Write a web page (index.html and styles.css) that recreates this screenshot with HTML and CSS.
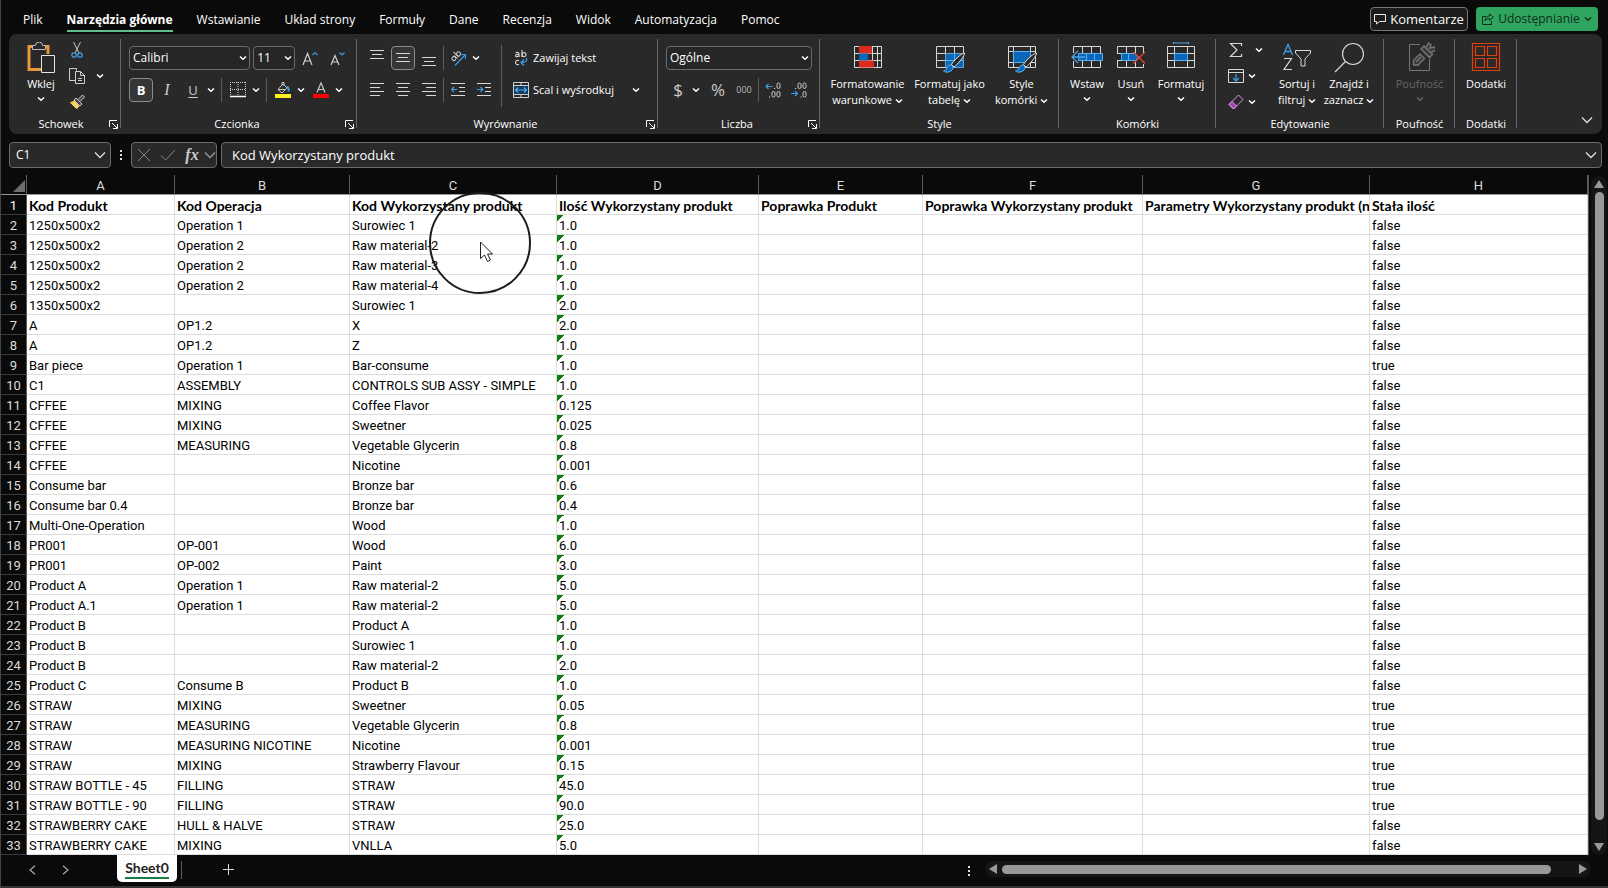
FILE: index.html
```html
<!DOCTYPE html>
<html lang="pl">
<head>
<meta charset="utf-8">
<title>Sheet0</title>
<link rel="stylesheet" href="styles.css">
</head>
<body>
<svg class="defs" aria-hidden="true">
  <symbol id="chev" viewBox="0 0 8 6"><path d="M1 1.500 4 4.300 7 1.500" fill="none" stroke="currentColor" stroke-width="1.500"/></symbol>
  <symbol id="chev-l" viewBox="0 0 12 8"><path d="M1 1.500 6 6.500 11 1.500" fill="none" stroke="currentColor" stroke-width="1.300"/></symbol>
  <symbol id="launch" viewBox="0 0 9 9"><path d="M.5 7V.5H8M3 3l5 5M8.500 4v4.500H4" fill="none" stroke="currentColor"/></symbol>
</svg>
<div class="app">
<header class="tabs">
  <nav class="menu">
    <a href="#">Plik</a><a href="#" class="on">Narzędzia główne</a><a href="#">Wstawianie</a><a href="#">Układ strony</a><a href="#">Formuły</a><a href="#">Dane</a><a href="#">Recenzja</a><a href="#">Widok</a><a href="#">Automatyzacja</a><a href="#">Pomoc</a>
  </nav>
  <button class="comments"><svg width="12" height="11" viewBox="0 0 12 11"><path d="M.5.5h11v7H5.500L2.500 10V7.500h-2z" fill="none" stroke="#eee"/></svg>Komentarze</button>
  <button class="share"><svg width="12" height="12" viewBox="0 0 12 12"><path d="M4 3.500H.5v8h9V8M7.500 1l4 3.200-4 3.200V5.500C5.500 5.500 4 6.200 3 8c0-3 2-5 4.500-5z" fill="none" stroke="#0c2f1b"/></svg>Udostępnianie<svg class="c"><use href="#chev"/></svg></button>
</header>

<section class="ribbon">
  <div class="group g1">
    <div class="tools">
      <button class="big"><svg width="28" height="32" viewBox="0 0 28 32"><path d="M7 4.500H2v23h12M17 4.500h4V12" fill="none" stroke="#e8973a" stroke-width="3"/><path d="M5.500 7.500v-4h3a3.500 3.500 0 0 1 7 0h3v4z" fill="#292929" stroke="#bbb"/><path d="M14.500 13.500h13v17h-13z" fill="#292929" stroke="#e6e6e6"/></svg><span>Wklej</span><svg class="c"><use href="#chev"/></svg></button>
      <div class="stack">
        <div class="row"><button class="ib" aria-label="Wytnij"><svg width="12" height="16" viewBox="0 0 12 16"><path d="M2.500 0 8 11M9.500 0 4 11" fill="none" stroke="#c8c8c8"/><circle cx="3" cy="13" r="2.200" fill="none" stroke="#3f9be0" stroke-width="1.300"/><circle cx="9" cy="13" r="2.200" fill="none" stroke="#3f9be0" stroke-width="1.300"/></svg></button></div>
        <div class="row"><button class="ib" aria-label="Kopiuj"><svg width="16" height="16" viewBox="0 0 16 16"><path d="M6 12.500H.5V.5h7v2M6.500 3.500h5l4 4v8h-9zM11.500 3.500v4h4M9 10.500h4M9 12.500h4" fill="none" stroke="#d0d0d0"/></svg></button><button class="dd" aria-label="Opcje kopiowania"><svg class="c"><use href="#chev"/></svg></button></div>
        <div class="row"><button class="ib" aria-label="Malarz formatów"><svg width="16" height="16" viewBox="0 0 16 16"><path d="M.8 8.500 5 6.500l5.500 5.500L8 15.300z" fill="#f4c542"/><path d="M3 9.500l4 4.500M5 8.500l4 4.500" stroke="#fff3c0"/><path d="M5 6l2-2 6 6-2 2zM9 5.500 13.500 1l2 2L11 7.500" fill="#444" stroke="#d0d0d0"/></svg></button></div>
      </div>
    </div>
    <footer><span>Schowek</span><button class="launch" aria-label="Opcje schowka"><svg><use href="#launch"/></svg></button></footer>
  </div>

  <div class="group g2">
    <div class="tools rows">
      <div class="row r3">
        <label class="combo font"><select aria-label="Czcionka"><option>Calibri</option></select><svg class="c"><use href="#chev"/></svg></label>
        <label class="combo size"><select aria-label="Rozmiar"><option>11</option></select><svg class="c"><use href="#chev"/></svg></label>
        <button class="ib" aria-label="Zwiększ czcionkę"><svg width="16" height="15" viewBox="0 0 16 15"><path d="M1 14 5.500 2.500 10 14M2.500 10h6" fill="none" stroke="#d0d0d0" stroke-width="1.200"/><path d="M10.500 4 13 1.500 15.500 4" fill="none" stroke="#3f9be0" stroke-width="1.200"/></svg></button>
        <button class="ib" aria-label="Zmniejsz czcionkę"><svg width="15" height="15" viewBox="0 0 15 15"><path d="M1 14 5 4.500 9 14M2.300 11h5.400" fill="none" stroke="#d0d0d0" stroke-width="1.200"/><path d="M9.500 1.500 12 4l2.500-2.500" fill="none" stroke="#3f9be0" stroke-width="1.200"/></svg></button>
      </div>
      <div class="row r2">
        <button class="ib on bold">B</button><button class="ib ital">I</button>
        <span class="split"><button class="ib under">U</button><button class="dd" aria-label="Opcje podkreślenia"><svg class="c"><use href="#chev"/></svg></button></span>
        <i class="sep wide"></i>
        <span class="split"><button class="ib" aria-label="Obramowanie"><svg width="16" height="16" viewBox="0 0 16 16"><path d="M.5 0v14M8 0v14M15.500 0v14M0 .5h16M0 7.500h16" fill="none" stroke="#ccc" stroke-dasharray="1 1"/><path d="M0 14.500h16" stroke="#fff" stroke-width="1.500"/></svg></button><button class="dd" aria-label="Opcje obramowania"><svg class="c"><use href="#chev"/></svg></button></span>
        <i class="sep wide"></i>
        <span class="split"><button class="ib" aria-label="Kolor wypełnienia"><svg width="16" height="16" viewBox="0 0 16 16"><path d="M3 7.500 8 2l4 4-5 5zM7 3V.5h2V4M3.500 7.500h7" fill="none" stroke="#c8c8c8"/><path d="M12 4.500c1.500 1 2 3 1.500 5" fill="none" stroke="#3f9be0" stroke-width="2"/><path d="M0 12h16v4H0z" fill="#fcee21"/></svg></button><button class="dd" aria-label="Opcje wypełnienia"><svg class="c"><use href="#chev"/></svg></button></span>
        <span class="split"><button class="ib" aria-label="Kolor czcionki"><svg width="16" height="16" viewBox="0 0 16 16"><path d="M4 10.500 8 .8l4 9.700M5.300 7.500h5.400" fill="none" stroke="#c8c8c8" stroke-width="1.200"/><path d="M0 12h16v4H0z" fill="#f00"/></svg></button><button class="dd" aria-label="Opcje koloru"><svg class="c"><use href="#chev"/></svg></button></span>
      </div>
    </div>
    <footer><span>Czcionka</span><button class="launch" aria-label="Opcje czcionki"><svg><use href="#launch"/></svg></button></footer>
  </div>

  <div class="group g3">
    <div class="tools">
      <div class="rows">
        <div class="row r2">
          <button class="ib" aria-label="Do góry"><svg width="14" height="16" viewBox="0 0 14 16"><path d="M0 .5h14M2 4.500h10M0 8.500h14" stroke="#d8d8d8"/></svg></button>
          <button class="ib on" aria-label="Do środka"><svg width="14" height="16" viewBox="0 0 14 16"><path d="M0 3.500h14M2 7.500h10M0 11.500h14" stroke="#d8d8d8"/></svg></button>
          <button class="ib" aria-label="Do dołu"><svg width="14" height="16" viewBox="0 0 14 16"><path d="M0 7.500h14M2 11.500h10M0 15.500h14" stroke="#d8d8d8"/></svg></button>
          <i class="sep"></i>
          <span class="split"><button class="ib orient" aria-label="Orientacja"><svg width="16" height="16" viewBox="0 0 16 16"><g fill="none" stroke="#ccc" transform="rotate(-45 5 6)"><circle cx="2.500" cy="7" r="2"/><path d="M4.700 5v4.500M6.800 2v7.500"/><circle cx="9" cy="7" r="2"/></g><path d="M5 15.500 15 5M10.500 4.500H15.500V9" fill="none" stroke="#3f9be0" stroke-width="1.200"/></svg></button><button class="dd" aria-label="Opcje orientacji"><svg class="c"><use href="#chev"/></svg></button></span>
        </div>
        <div class="row r2">
          <button class="ib" aria-label="Do lewej"><svg width="14" height="16" viewBox="0 0 14 16"><path d="M0 1.500h14M0 5.500h10M0 9.500h14M0 13.500h10" stroke="#d8d8d8"/></svg></button>
          <button class="ib" aria-label="Wyśrodkuj"><svg width="14" height="16" viewBox="0 0 14 16"><path d="M0 1.500h14M2 5.500h10M0 9.500h14M2 13.500h10" stroke="#d8d8d8"/></svg></button>
          <button class="ib" aria-label="Do prawej"><svg width="14" height="16" viewBox="0 0 14 16"><path d="M0 1.500h14M4 5.500h10M0 9.500h14M4 13.500h10" stroke="#d8d8d8"/></svg></button>
          <i class="sep"></i>
          <button class="ib" aria-label="Zmniejsz wcięcie"><svg width="14" height="16" viewBox="0 0 14 16"><path d="M0 1.500h14M8 5.500h6M8 9.500h6M0 13.500h14" stroke="#d8d8d8"/><path d="M6 7.500H1M3 5 .7 7.500 3 10" fill="none" stroke="#3f9be0" stroke-width="1.200"/></svg></button>
          <button class="ib" aria-label="Zwiększ wcięcie"><svg width="14" height="16" viewBox="0 0 14 16"><path d="M0 1.500h14M8 5.500h6M8 9.500h6M0 13.500h14" stroke="#d8d8d8"/><path d="M0 7.500h5.500M3.500 5l2.300 2.500L3.500 10" fill="none" stroke="#3f9be0" stroke-width="1.200"/></svg></button>
        </div>
      </div>
      <i class="sep tall"></i>
      <div class="rows">
        <button class="txt"><svg width="16" height="16" viewBox="0 0 16 16"><g fill="none" stroke="#ccc" stroke-width="1.200"><path d="M2.500 2.800c1-.6 3.500-.7 3.500 1V7M6 4.400C3.800 4.200 2.500 4.600 2.500 5.600c0 1.500 2.700 1.300 3.500 0M9 0v7"/><circle cx="11" cy="4.700" r="2"/><path d="M6 10.800c-1.500-1-3.500-.3-3.500 1.700s2 2.700 3.500 1.700"/></g><path d="M13.500 8c1 3-1 4.500-5 4.500M11 9.500l-3 3 3 3" fill="none" stroke="#3f9be0" stroke-width="1.300"/></svg>Zawijaj tekst</button>
        <div class="row"><button class="txt"><svg width="16" height="16" viewBox="0 0 16 16"><path d="M.5.5h15v15H.5zM0 3.500h16M0 12.500h16M8 0v3M8 13v3" fill="none" stroke="#d0d0d0"/><path d="M1 4h14v8H1z" fill="#123a5c"/><path d="M2.500 8h11M5 5.500 2.500 8 5 10.500M11 5.500 13.500 8 11 10.500" fill="none" stroke="#55aef0" stroke-width="1.200"/></svg>Scal i wyśrodkuj</button><button class="dd mg" aria-label="Opcje scalania"><svg class="c"><use href="#chev"/></svg></button></div>
      </div>
    </div>
    <footer><span>Wyrównanie</span><button class="launch" aria-label="Opcje wyrównania"><svg><use href="#launch"/></svg></button></footer>
  </div>

  <div class="group g4">
    <div class="tools rows">
      <label class="combo"><select aria-label="Format liczb"><option>Ogólne</option></select><svg class="c"><use href="#chev"/></svg></label>
      <div class="row r2">
        <span class="split"><button class="ib dollar">$</button><button class="dd" aria-label="Waluty"><svg class="c"><use href="#chev"/></svg></button></span>
        <i></i>
        <button class="ib dollar">%</button><button class="ib zero">000</button><i class="sep"></i>
        <button class="ib" aria-label="Zwiększ dziesiętne"><svg width="16" height="16" viewBox="0 0 16 16"><g fill="none" stroke="#ccc"><rect x="12" y="1" width="3" height="5.500" rx="1.500"/><rect x="7" y="9.500" width="3" height="5.500" rx="1.500"/><rect x="12" y="9.500" width="3" height="5.500" rx="1.500"/><path d="M4 15h1.200M9 6.500h1.200"/></g><path d="M7.500 4.500H1M3.500 2 1 4.500 3.500 7" fill="none" stroke="#3f9be0" stroke-width="1.200"/></svg></button>
        <button class="ib" aria-label="Zmniejsz dziesiętne"><svg width="16" height="16" viewBox="0 0 16 16"><g fill="none" stroke="#ccc"><rect x="7" y="1" width="3" height="5.500" rx="1.500"/><rect x="12" y="1" width="3" height="5.500" rx="1.500"/><rect x="12" y="9.500" width="3" height="5.500" rx="1.500"/><path d="M4 6.500h1.200M9.500 15h1.200"/></g><path d="M0 11.500h6.500M4 9l2.500 2.500L4 14" fill="none" stroke="#3f9be0" stroke-width="1.200"/></svg></button>
      </div>
    </div>
    <footer><span>Liczba</span><button class="launch" aria-label="Opcje liczb"><svg><use href="#launch"/></svg></button></footer>
  </div>

  <div class="group g5">
    <div class="tools">
      <button class="big w80"><svg width="30" height="32" viewBox="0 0 30 32"><path d="M1.500 4.500h27v21h-27zM1 11.500h28M1 18.500h28M6.500 4v22M19.500 4v22M24.500 4v22" fill="none" stroke="#d8d8d8"/><path d="M6 4h13v7.500H6zM6 18.500h15v7H6z" fill="#dc2a1c"/><path d="M6 11.500h9v7H6z" fill="#0a66b8"/></svg><span>Formatowanie<br>warunkowe <svg class="c"><use href="#chev"/></svg></span></button>
      <button class="big w80"><svg width="30" height="32" viewBox="0 0 30 32"><path d="M1.500 4.500h27v21h-27zM1 11.500h28M1 18.500h28M10.500 4v22M19.500 4v22" fill="none" stroke="#d8d8d8"/><path d="M10.500 11.500h18v14h-18z" fill="#0a66b8"/><path d="M19.500 11v15M10 18.500h18" stroke="#5db0ee"/><path d="M29.500 11c1 1.500-7 12-10.500 14l-2.500-2.500C18 19 28 10 29.500 11z" fill="#292929" stroke="#e0e0e0"/><path d="M8.500 29c4-.5 2.500-5.500 7-6 4 1 3 6-2 7-2 .3-4 0-5-1z" fill="#0a66b8" stroke="#5db0ee"/></svg><span>Formatuj jako<br>tabelę <svg class="c"><use href="#chev"/></svg></span></button>
      <button class="big w62"><svg width="30" height="32" viewBox="0 0 30 32"><path d="M1.500 4.500h27v21h-27zM1 9.500h28M1 20.500h28M6.500 4v22M23.500 4v22" fill="none" stroke="#d8d8d8"/><path d="M6.500 9.500h17v11h-17z" fill="#0a66b8" stroke="#5db0ee"/><path d="M29.500 11c1 1.500-7 12-10.500 14l-2.500-2.500C18 19 28 10 29.500 11z" fill="#292929" stroke="#e0e0e0"/><path d="M8.500 29c4-.5 2.500-5.500 7-6 4 1 3 6-2 7-2 .3-4 0-5-1z" fill="#0a66b8" stroke="#5db0ee"/></svg><span>Style<br>komórki <svg class="c"><use href="#chev"/></svg></span></button>
    </div>
    <footer><span>Style</span></footer>
  </div>

  <div class="group g6">
    <div class="tools">
      <button class="big w42"><svg width="32" height="32" viewBox="0 0 32 32"><path d="M2.500 11V4.500h27V11M2.500 19v6.500h27V19M11.500 4v7M20.500 4v7M11.500 19v7M20.500 19v7" fill="none" stroke="#d8d8d8"/><path d="M7.500 11.500h24v7h-24zM15.500 11.500v7M23.500 11.500v7" fill="#0a66b8" stroke="#5db0ee"/><path d="M14 15H1.500M7 9l-6 6 6 6" fill="none" stroke="#4aa4ea" stroke-width="1.300"/></svg><span>Wstaw</span><svg class="c"><use href="#chev"/></svg></button>
      <button class="big w42"><svg width="32" height="32" viewBox="0 0 32 32"><path d="M2.500 11V4.500h26V11M2.500 19v6.500h26V22M11.500 4v7M20.500 4v7M11.500 19v7M20.500 19v7M2 11.500h5M2 18.500h5" fill="none" stroke="#d8d8d8"/><path d="M6.500 11.500h14l3 3.500-3 3.500h-14zM13.500 11.500v7" fill="#0a66b8" stroke="#5db0ee"/><path d="M18.500 10 30 21.500M30 10 18.500 21.500" stroke="#e0452c" stroke-width="1.400"/></svg><span>Usuń</span><svg class="c"><use href="#chev"/></svg></button>
      <button class="big w56"><svg width="30" height="32" viewBox="0 0 30 32"><path d="M1.500 4.500h27v21h-27zM1 11.500h28M1 18.500h28M8.500 4v22M21.500 4v22" fill="none" stroke="#d8d8d8"/><path d="M8.500 11.500h13v7h-13z" fill="#0a66b8" stroke="#5db0ee"/><path d="M7.500 1h15M7.500 0v2M22.500 0v2" stroke="#4aa4ea" stroke-width="1.200"/></svg><span>Formatuj</span><svg class="c"><use href="#chev"/></svg></button>
    </div>
    <footer><span>Komórki</span></footer>
  </div>

  <div class="group g7">
    <div class="tools">
      <div class="stack">
        <div class="row sum"><button class="ib" aria-label="Autosumowanie"><svg width="14" height="16" viewBox="0 0 14 16"><path d="M12.500 4V1.500H1.500L8 8l-6.500 6.500h11V12" fill="none" stroke="#d8d8d8" stroke-width="1.200"/></svg></button><button class="dd" aria-label="Funkcje"><svg class="c"><use href="#chev"/></svg></button></div>
        <div class="row"><button class="ib" aria-label="Wypełnij"><svg width="16" height="16" viewBox="0 0 16 16"><path d="M.5 1.500h15v13H.5zM0 4.500h16" fill="none" stroke="#d8d8d8"/><path d="M8 6v7M5 10l3 3 3-3" fill="none" stroke="#3f9be0" stroke-width="1.300"/></svg></button><button class="dd" aria-label="Opcje wypełniania"><svg class="c"><use href="#chev"/></svg></button></div>
        <div class="row"><button class="ib" aria-label="Wyczyść"><svg width="16" height="16" viewBox="0 0 16 16"><path d="M10.500 1 15 5.500 5.500 15 1 10.500z" fill="none" stroke="#d5a0dd"/><path d="M4 7.500 8.500 12l-3 3L1 10.500z" fill="#a63fb5" stroke="#d5a0dd"/></svg></button><button class="dd" aria-label="Opcje czyszczenia"><svg class="c"><use href="#chev"/></svg></button></div>
      </div>
      <button class="big w52"><svg width="30" height="32" viewBox="0 0 30 32"><path d="M1.500 13 6 2.500 10.500 13M3 9.500h6" fill="none" stroke="#3f9be0" stroke-width="1.300"/><path d="M2 16.500h7.500L2 27.500h8" fill="none" stroke="#d8d8d8" stroke-width="1.200"/><path d="M13.500 8.500h15v2.500L23 17v7h-4v-7l-5.500-6z" fill="none" stroke="#d8d8d8"/></svg><span>Sortuj i<br>filtruj <svg class="c"><use href="#chev"/></svg></span></button>
      <button class="big w52"><svg width="30" height="32" viewBox="0 0 30 32"><circle cx="19" cy="12" r="10.500" fill="none" stroke="#d8d8d8" stroke-width="1.200"/><path d="M11.500 19.500 1 30" stroke="#d8d8d8" stroke-width="1.200"/></svg><span>Znajdź i<br>zaznacz <svg class="c"><use href="#chev"/></svg></span></button>
    </div>
    <footer><span>Edytowanie</span></footer>
  </div>

  <div class="group g8">
    <div class="tools"><button class="big w56" disabled><svg width="30" height="32" viewBox="0 0 30 32"><path d="M15 2.500H4.500v26h20V17" fill="none" stroke="#777"/><path d="M8.500 18.500l6.500-6.500 4.500 4.500-6.500 6.500h-4.500zM11 20l5-5" fill="#3a3a3a" stroke="#777" stroke-width="1.400"/><path d="M16 7l3-3 8.500 8.500-3 3zM20.500 6.500l3-5.500 2.500 2-1 3 5-1 .5 3.500-4 1.500" fill="#3a3a3a" stroke="#777" stroke-width="1.400"/></svg><span>Poufność</span><svg class="c"><use href="#chev"/></svg></button></div>
    <footer><span>Poufność</span></footer>
  </div>

  <div class="group g9">
    <div class="tools"><button class="big w56"><svg width="30" height="32" viewBox="0 0 30 32"><path d="M1.500 1.500h27v27h-27zM4.500 4.500h9v9h-9zM16.500 4.500h9v9h-9zM4.500 16.500h9v9h-9zM16.500 16.500h9v9h-9z" fill="none" stroke="#e0400c" stroke-width="1.200"/></svg><span>Dodatki</span></button></div>
    <footer><span>Dodatki</span></footer>
  </div>
  <button class="collapse" aria-label="Zwiń wstążkę"><svg class="cl"><use href="#chev-l"/></svg></button>
</section>

<section class="fbar">
  <label class="combo name"><input aria-label="Pole nazwy" value="C1"><svg class="cl"><use href="#chev-l"/></svg></label>
  <span class="dots"></span>
  <div class="fx"><button aria-label="Anuluj"><svg width="14" height="14" viewBox="0 0 14 14"><path d="M1 1l12 12M13 1 1 13" stroke="#858585"/></svg></button><button aria-label="Wpis"><svg width="16" height="14" viewBox="0 0 16 14"><path d="M1 7.500 5.500 12 15 2" fill="none" stroke="#858585"/></svg></button><button class="fn">fx</button><button aria-label="Funkcje"><svg class="cl dim"><use href="#chev-l"/></svg></button></div>
  <label class="combo formula"><input aria-label="Pasek formuły" value="Kod Wykorzystany produkt"><svg class="cl"><use href="#chev-l"/></svg></label>
</section>

<main class="work">
<table class="grid">
<colgroup><col class="k"><col class="a"><col class="b"><col class="cc"><col class="d"><col class="e"><col class="f"><col class="g"><col></colgroup>
<thead><tr><th class="corner"><svg width="12" height="12" viewBox="0 0 12 12"><path d="M12 0v12H0z" fill="#6e6e6e"/></svg></th><th>A</th><th>B</th><th>C</th><th>D</th><th>E</th><th>F</th><th>G</th><th>H</th></tr></thead>
<tbody>
<tr class="head"><th>1<td>Kod Produkt<td>Kod Operacja<td>Kod Wykorzystany produkt<td>Ilość Wykorzystany produkt<td>Poprawka Produkt<td>Poprawka Wykorzystany produkt<td>Parametry Wykorzystany produkt (na<td>Stała ilość
<tr><th>2<td>1250x500x2<td>Operation 1<td>Surowiec 1<td>1.0<td><td><td><td>false
<tr><th>3<td>1250x500x2<td>Operation 2<td>Raw material-2<td>1.0<td><td><td><td>false
<tr><th>4<td>1250x500x2<td>Operation 2<td>Raw material-3<td>1.0<td><td><td><td>false
<tr><th>5<td>1250x500x2<td>Operation 2<td>Raw material-4<td>1.0<td><td><td><td>false
<tr><th>6<td>1350x500x2<td><td>Surowiec 1<td>2.0<td><td><td><td>false
<tr><th>7<td>A<td>OP1.2<td>X<td>2.0<td><td><td><td>false
<tr><th>8<td>A<td>OP1.2<td>Z<td>1.0<td><td><td><td>false
<tr><th>9<td>Bar piece<td>Operation 1<td>Bar-consume<td>1.0<td><td><td><td>true
<tr><th>10<td>C1<td>ASSEMBLY<td>CONTROLS SUB ASSY - SIMPLE<td>1.0<td><td><td><td>false
<tr><th>11<td>CFFEE<td>MIXING<td>Coffee Flavor<td>0.125<td><td><td><td>false
<tr><th>12<td>CFFEE<td>MIXING<td>Sweetner<td>0.025<td><td><td><td>false
<tr><th>13<td>CFFEE<td>MEASURING<td>Vegetable Glycerin<td>0.8<td><td><td><td>false
<tr><th>14<td>CFFEE<td><td>Nicotine<td>0.001<td><td><td><td>false
<tr><th>15<td>Consume bar<td><td>Bronze bar<td>0.6<td><td><td><td>false
<tr><th>16<td>Consume bar 0.4<td><td>Bronze bar<td>0.4<td><td><td><td>false
<tr><th>17<td>Multi-One-Operation<td><td>Wood<td>1.0<td><td><td><td>false
<tr><th>18<td>PR001<td>OP-001<td>Wood<td>6.0<td><td><td><td>false
<tr><th>19<td>PR001<td>OP-002<td>Paint<td>3.0<td><td><td><td>false
<tr><th>20<td>Product A<td>Operation 1<td>Raw material-2<td>5.0<td><td><td><td>false
<tr><th>21<td>Product A.1<td>Operation 1<td>Raw material-2<td>5.0<td><td><td><td>false
<tr><th>22<td>Product B<td><td>Product A<td>1.0<td><td><td><td>false
<tr><th>23<td>Product B<td><td>Surowiec 1<td>1.0<td><td><td><td>false
<tr><th>24<td>Product B<td><td>Raw material-2<td>2.0<td><td><td><td>false
<tr><th>25<td>Product C<td>Consume B<td>Product B<td>1.0<td><td><td><td>false
<tr><th>26<td>STRAW<td>MIXING<td>Sweetner<td>0.05<td><td><td><td>true
<tr><th>27<td>STRAW<td>MEASURING<td>Vegetable Glycerin<td>0.8<td><td><td><td>true
<tr><th>28<td>STRAW<td>MEASURING NICOTINE<td>Nicotine<td>0.001<td><td><td><td>true
<tr><th>29<td>STRAW<td>MIXING<td>Strawberry Flavour<td>0.15<td><td><td><td>true
<tr><th>30<td>STRAW BOTTLE - 45<td>FILLING<td>STRAW<td>45.0<td><td><td><td>true
<tr><th>31<td>STRAW BOTTLE - 90<td>FILLING<td>STRAW<td>90.0<td><td><td><td>true
<tr><th>32<td>STRAWBERRY CAKE<td>HULL &amp; HALVE<td>STRAW<td>25.0<td><td><td><td>false
<tr><th>33<td>STRAWBERRY CAKE<td>MIXING<td>VNLLA<td>5.0<td><td><td><td>false
</tbody>
</table>
<div class="vbar"><i class="up"></i><i class="thumb"></i><i class="down"></i></div>
<svg class="pointer" width="104" height="104" viewBox="0 0 104 104"><circle cx="52" cy="51" r="50" fill="none" stroke="#1c1c1c" stroke-width="2"/><path d="M52.500 50v16.500l4-3.500 3 6.500 3-1.500-3-6h5z" fill="#fff" stroke="#222"/></svg>
</main>

<footer class="sheets">
  <button class="nav" aria-label="Poprzedni"><svg width="7" height="10" viewBox="0 0 7 10"><path d="M6 .7 1 5l5 4.300" fill="none" stroke="#aaa" stroke-width="1.200"/></svg></button>
  <button class="nav" aria-label="Następny"><svg width="7" height="10" viewBox="0 0 7 10"><path d="M1 .7 6 5 1 9.300" fill="none" stroke="#aaa" stroke-width="1.200"/></svg></button>
  <button class="sheet"><span>Sheet0</span></button>
  <i class="sep"></i>
  <button class="add" aria-label="Nowy arkusz"><svg width="11" height="11" viewBox="0 0 11 11"><path d="M5.500 0v11M0 5.500h11" stroke="#ddd"/></svg></button>
  <span class="dots"></span>
  <div class="hbar"><i class="left"></i><i class="thumb"></i><i class="right"></i></div>
</footer>
</div>
</body>
</html>
```

FILE: styles.css
```css
* { box-sizing: border-box; }
body {
  margin: 0;
  background: #0a0a0a;
  color: #fff;
  font: 11px/16px "Open Sans", "Noto Sans", sans-serif;
}
button, input, select {
  font: inherit;
  color: inherit;
  background: none;
  border: 0;
  padding: 0;
  margin: 0;
  outline: 0;
}
svg { display: block; flex: none; }
.defs { position: absolute; width: 0; height: 0; }
.app {
  min-height: 100vh;
  display: flex;
  flex-direction: column;
  border-left: 1px solid #444;
}

.tabs { display: flex; align-items: center; height: 34px; padding: 4px 4px 0 22px; }
.menu { flex: 1; display: flex; gap: 24px; font-size: 12px; }
.menu a { color: #fff; text-decoration: none; padding: 6px 0 2px; line-height: 16px; white-space: nowrap; border-bottom: 2px solid transparent; }
.menu .on { font-weight: 700; border-color: #5fc08b; }
.comments, .share { display: flex; align-items: center; justify-content: center; gap: 4px; height: 24px; border-radius: 4px; font-size: 12px; }
.comments { width: 98px; border: 1px solid #777; background: #1c1c1c; margin-right: 8px; font-size: 13px; }
.share { width: 122px; background: #30a55f; color: #0c2f1b; margin-right: 6px; }

.c { display: inline-block; width: 8px; height: 6px; }
.cl { width: 12px; height: 8px; color: #ddd; }
.dim { color: #999; }

.ribbon { display: flex; height: 100px; margin: 0 6px 0 8px; background: #292929; border-radius: 8px; }
.group { position: relative; display: flex; flex-direction: column; flex: none; padding: 8px 8px 2px 8px; }
.group::after { content: ""; position: absolute; right: 0; top: 5px; bottom: 6px; width: 1px; background: #666; }
.g1 { width: 112px; }
.g2 { width: 236px; }
.g3 { width: 301px; }
.g4 { width: 162px; }
.g5 { width: 239px; }
.g6 { width: 157px; }
.g7 { width: 168px; }
.g8 { width: 71px; }
.g9 { width: 62px; }
.g1, .g6, .g7, .g8, .g9 { padding-left: 4px; padding-right: 4px; }
.tools { flex: 1; display: flex; justify-content: flex-start; }
.g5 .tools, .g8 .tools, .g9 .tools { justify-content: center; }
.rows { display: flex; flex-direction: column; gap: 8px; padding-top: 4px; }
.row, .split { display: flex; align-items: center; }
.r2 { gap: 2px; }
.r3 { gap: 3px; }
.group footer { display: flex; align-items: center; height: 16px; text-align: center; }
.group footer span { flex: 1; }
.launch { width: 9px; height: 9px; margin-right: -5px; }
.g1 .launch { margin-right: -1px; }
.launch svg { width: 9px; height: 9px; }
.ib { display: flex; align-items: center; justify-content: center; width: 24px; height: 24px; flex: none; border-radius: 4px; }
.ib.on { border: 1px solid #8a8a8a; background: #363636; }
.dd { display: flex; align-items: center; justify-content: center; width: 12px; height: 24px; }
.bold { font-weight: 700; font-size: 13px; }
.ital { font: italic 16px "Liberation Serif", serif; color: #ccc; }
.under { font-size: 13px; text-decoration: underline; text-underline-offset: 2px; color: #ccc; }
.dollar { font-size: 17px; color: #ccc; }
.zero { font-size: 9px; color: #bbb; }
.sep { flex: none; width: 1px; height: 24px; background: #5c5c5c; }
.sep.wide { margin: 0 2px; }
.sep.tall { height: 62px; margin: 3px 11px 0 5px; }
.combo { display: grid; align-items: center; height: 24px; border: 1px solid #6a6a6a; border-radius: 4px; background: #262626; }
.combo > * { grid-area: 1 / 1; }
.combo select, .combo input { appearance: none; width: 100%; padding-left: 3px; font-size: 12px; }
.combo svg { justify-self: end; margin-right: 2px; pointer-events: none; }
.font { width: 122px; }
.size { width: 42px; }
.txt { display: flex; align-items: center; gap: 4px; height: 24px; white-space: nowrap; }
.mg { margin-left: 16px; }

.big { display: flex; flex-direction: column; align-items: center; flex: none; line-height: 16px; white-space: nowrap; }
.big span { margin-top: 2px; }
.big > .c { margin-top: 4px; }
.big:disabled { color: #666; }
.g1 .big { width: 56px; }
.w80 { width: 82px; }
.w62 { width: 62px; }
.w42 { width: 44px; }
.w56 { width: 56px; }
.w52 { width: 52px; }
.g6 .tools { padding-left: 2px; }
.stack { display: flex; flex-direction: column; gap: 2px; margin: -4px 0 0 -4px; }
.stack .dd { margin-left: 5px; }
.g7 .stack { margin: -4px 6px 0 4px; }
.g7 .stack .dd { margin-left: -2px; }
.g7 .stack .sum .dd { margin-left: 5px; }
.collapse { margin: auto 9px 10px auto; }

.fbar { display: flex; margin: 8px 6px 7px 8px; height: 26px; font-size: 12px; }
.fbar .combo, .fx { height: 26px; border: 1px solid #6a6a6a; border-radius: 4px; background: #292929; }
.fbar .combo svg { margin-right: 4px; }
.fbar .name { width: 102px; }
.fbar .name input { padding-left: 6px; }
.dots { width: 3px; height: 11px; background: radial-gradient(circle at 1px 1px, #ddd 1px, transparent 1px) 0 0 / 3px 4px; }
.fbar .dots { margin: 8px 8px 0 9px; }
.fx { width: 86px; display: grid; grid-template-columns: 24px 24px 24px 12px; place-items: center; }
.fn { font: italic bold 16px "Liberation Serif", serif; color: #ccc; }
.fbar .formula { flex: 1; margin-left: 4px; }
.fbar .formula input { padding-left: 10px; font-size: 13px; }

.work { position: relative; display: flex; }
.grid { flex: 1; width: 0; table-layout: fixed; border-collapse: separate; border-spacing: 0; color: #000; font: 13px/17px Roboto, "Noto Sans", sans-serif; border-right: 1px solid #555; }
.k { width: 26px; }
.a { width: 148px; }
.b { width: 175px; }
.cc { width: 207px; }
.d { width: 202px; }
.e { width: 164px; }
.f { width: 220px; }
.g { width: 227px; }
.grid td { height: 20px; padding: 2px 2px 0; background: #fff; border-right: 1px solid #dcdcdc; border-bottom: 1px solid #dcdcdc; overflow: hidden; white-space: nowrap; }
.grid th { height: 20px; padding: 2px 0 0; background: #0a0a0a; color: #ddd; font-weight: 400; text-align: center; border-right: 1px solid #5a5a5a; border-bottom: 1px solid #3c3c3c; }
.grid thead th { border-bottom-color: #999; }
.grid .corner svg { margin: 0 1px 0 auto; }
.grid .head th { color: #fff; }
.grid .head td { font: 700 14px/17px Lato, "Noto Sans", sans-serif; }
.grid tr:not(.head) td:nth-child(5) { background: linear-gradient(135deg, #107c10 50%, #fff 50%) 0 0 / 7px 7px no-repeat #fff; }
.vbar, .hbar { display: flex; align-items: center; background: #151515; border-radius: 8px; }
.vbar { flex-direction: column; width: 16px; margin: 1px 1px 0 2px; padding: 4px 0; }
.thumb { background: #999; border-radius: 5px; flex: 1; }
.vbar .thumb { width: 9px; margin: 4px 0 23px; }
.up, .down, .left, .right { width: 0; height: 0; border: 5px solid transparent; }
.up { border-top: 0; border-bottom: 8px solid #999; }
.down { border-bottom: 0; border-top: 8px solid #999; }
.left { border-left: 0; border-right: 8px solid #999; }
.right { border-right: 0; border-left: 8px solid #999; }
.pointer { position: absolute; left: 427px; top: 17px; pointer-events: none; }

.sheets { display: flex; align-items: flex-start; flex: 1; min-height: 33px; border-bottom: 2px solid #333; }
.nav { width: 33px; height: 29px; display: grid; place-items: center; }
.nav:first-child { margin-left: 15px; }
.sheet { width: 60px; height: 27px; margin-left: 35px; background: #fff; color: #222; border-radius: 0 0 5px 5px; font: 700 14px/19px Lato, sans-serif; }
.sheet span { display: inline-block; border-bottom: 2px solid #1a7a44; }
.sheets .sep { height: 18px; margin: 6px 0 0 4px; }
.add { margin: 9px 0 0 41px; }
.sheets .dots { margin: 11px 14px 0 auto; }
.hbar { width: 606px; height: 16px; margin: 6px 17px 0 0; padding: 0 4px; }
.hbar .thumb { height: 9px; margin: 0 28px 0 5px; }
```
